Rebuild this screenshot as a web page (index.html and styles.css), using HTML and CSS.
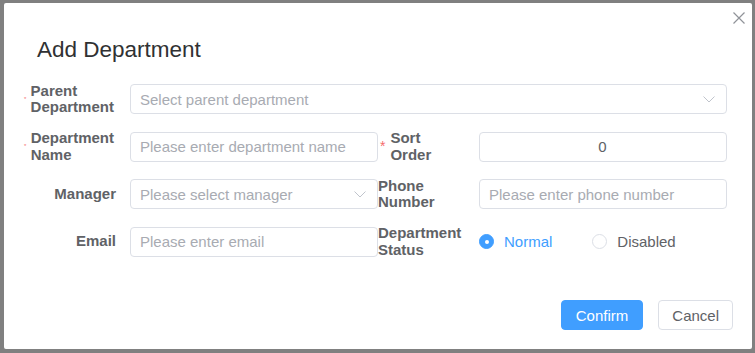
FILE: index.html
```html
<!DOCTYPE html>
<html>
 <head>
  <meta charset="utf-8">
  <title>Add Department</title>
  <link rel="stylesheet" href="styles.css">
 </head>
 <body>
  <div class="dialog">
   <div class="dialog-header">
    <span class="dialog-title">Add Department</span>
    <span class="dialog-close">
     <svg width="12" height="12" viewBox="0 0 12 12"><path d="M0.5 0.5 L11.5 11.5 M11.5 0.5 L0.5 11.5" stroke="#909399" stroke-width="1.2" fill="none"/></svg>
    </span>
   </div>

   <div class="dialog-body">
    <div class="form">
     <label class="label"><span class="req small">*</span><span class="text">Parent Department</span></label>
     <div class="select wide">
      <span class="placeholder">Select parent department</span>
      <svg class="arrow" width="12" height="7" viewBox="0 0 12 7"><path d="M0.5 0.5 L6 6 L11.5 0.5" stroke="#c0c4cc" stroke-width="1" fill="none"/></svg>
     </div>

     <label class="label"><span class="req small">*</span><span class="text">Department Name</span></label>
     <input class="input" type="text" placeholder="Please enter department name">
     <label class="label"><span class="req">*</span><span class="text">Sort Order</span></label>
     <input class="input center" type="text" value="0">

     <label class="label"><span class="text">Manager</span></label>
     <div class="select">
      <span class="placeholder">Please select manager</span>
      <svg class="arrow" width="12" height="7" viewBox="0 0 12 7"><path d="M0.5 0.5 L6 6 L11.5 0.5" stroke="#c0c4cc" stroke-width="1" fill="none"/></svg>
     </div>
     <label class="label"><span class="text">Phone Number</span></label>
     <input class="input" type="text" placeholder="Please enter phone number">

     <label class="label"><span class="text">Email</span></label>
     <input class="input" type="text" placeholder="Please enter email">
     <label class="label"><span class="text">Department Status</span></label>
     <div class="radios">
      <span class="radio checked"><span class="dot"></span>Normal</span>
      <span class="radio"><span class="dot"></span>Disabled</span>
     </div>
    </div>
   </div>

   <div class="dialog-footer">
    <button class="btn primary" type="button">Confirm</button>
    <button class="btn" type="button">Cancel</button>
   </div>
  </div>
 </body>
</html>
```

FILE: styles.css
```css
html, body {
    margin: 0;
    padding: 0;
    height: 100%;
}
body {
    background: #808080;
    font-family: "Liberation Sans", Arial, sans-serif;
    padding: 3px 0 0 4px;
    box-sizing: border-box;
}
.dialog {
    width: 748px;
    height: 346px;
    background: #fff;
    border-radius: 2px;
    position: relative;
    box-sizing: border-box;
}
.dialog-header {
    padding: 35px 20px 0 33px;
    height: 59px;
    box-sizing: border-box;
}
.dialog-title {
    font-size: 22.5px;
    line-height: 24px;
    color: #303133;
}
.dialog-close {
    position: absolute;
    top: 9px;
    right: 7px;
    width: 12px;
    height: 12px;
    line-height: 0;
}
.dialog-body {
    padding: 22px 25px 0 20px;
}
.form {
    display: grid;
    grid-template-columns: 106px 248px 101px 248px;
    grid-auto-rows: 30px;
    row-gap: 17.5px;
}
.label {
    display: flex;
    align-items: center;
    justify-content: flex-end;
    padding-right: 14px;
    font-size: 15px;
    line-height: 16.5px;
    font-weight: bold;
    color: #606266;
    min-width: 0;
}
.label .text {
    text-align: left;
}
.req {
    color: #f56c6c;
    font-size: 14px;
    font-weight: normal;
    margin: 0 5px 0 2px;
    align-self: center;
}
.req.small {
    font-size: 6px;
    margin: 0 4px 0 0;
    width: 4px;
}
.input, .select {
    height: 30px;
    box-sizing: border-box;
    border: 1px solid #dcdfe6;
    border-radius: 4px;
    background: #fff;
    font-family: inherit;
    font-size: 15px;
    color: #606266;
    padding: 0 10px 0 9px;
    outline: none;
    width: 100%;
    margin: 0;
}
.input::placeholder {
    color: #a8abb2;
}
.input.center {
    text-align: center;
}
.select {
    display: flex;
    align-items: center;
    justify-content: space-between;
    padding-right: 11px;
}
.select.wide {
    grid-column: span 3;
}
.placeholder {
    color: #a8abb2;
}
.arrow {
    display: block;
}
.radios {
    display: flex;
    align-items: center;
    font-size: 15px;
}
.radio {
    display: inline-flex;
    align-items: center;
    color: #606266;
    margin-right: 40px;
}
.radio .dot {
    width: 15px;
    height: 15px;
    box-sizing: border-box;
    border: 1px solid #dcdfe6;
    border-radius: 50%;
    margin-right: 10px;
    background: #fff;
    position: relative;
}
.radio.checked {
    color: #409eff;
}
.radio.checked .dot {
    background: #409eff;
    border-color: #409eff;
}
.radio.checked .dot::after {
    content: "";
    position: absolute;
    left: 4.5px;
    top: 4.5px;
    width: 4px;
    height: 4px;
    border-radius: 50%;
    background: #fff;
}
.dialog-footer {
    position: absolute;
    right: 19px;
    bottom: 19px;
    display: flex;
    gap: 15px;
}
.btn {
    height: 30px;
    padding: 0 13px;
    border: 1px solid #dcdfe6;
    border-radius: 4px;
    background: #fff;
    color: #606266;
    font-family: inherit;
    font-size: 15px;
    cursor: pointer;
}
.btn.primary {
    padding: 0 14px;
    background: #409eff;
    border-color: #409eff;
    color: #fff;
}
```
